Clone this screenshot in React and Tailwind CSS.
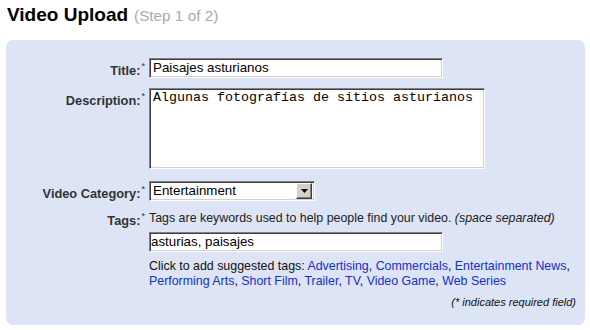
import React from "react";

const inset =
  "border border-t-[#808080] border-l-[#808080] border-b-white border-r-white shadow-[inset_1px_1px_0_#404040,inset_-1px_-1px_0_#d4d0c8] bg-white";

const Label = ({ children, className = "" }) => (
  <div className={"text-right font-bold text-[12.8px] text-[#333] " + className}>
    {children}
    <span className="font-normal text-[9px] align-top relative top-[-1px] ml-[1px]">*</span>
  </div>
);

const tags = [
  "Advertising",
  "Commercials",
  "Entertainment News",
  "Performing Arts",
  "Short Film",
  "Trailer",
  "TV",
  "Video Game",
  "Web Series",
];

const App = () => {
  return (
    <div className="w-[590px] h-[330px] bg-white overflow-hidden font-['Liberation_Sans',Arial,sans-serif] text-black">
      <div className="pl-[7px] pt-[3px] h-[40px] flex items-baseline">
        <h1 className="text-[19px] font-bold leading-[24px]">Video Upload</h1>
        <span className="ml-[6px] text-[15.3px] text-[#aaa]">(Step 1 of 2)</span>
      </div>

      <div className="ml-[6px] w-[579px] h-[285px] bg-[#dce4f5] rounded-[7px] pt-[18px]">
        <div className="grid grid-cols-[139px_1fr] gap-x-[4px]">
          <Label className="pt-[3px]">Title:</Label>
          <div className={"w-[294px] h-[20px] px-[3px] text-[13.33px] leading-[18px] " + inset}>
            Paisajes asturianos
          </div>

          <Label className="mt-[8px] pt-[3px]">Description:</Label>
          <div className={"mt-[8px] w-[336px] h-[81px] px-[3px] pt-[1px] font-['Liberation_Mono','Courier_New',monospace] text-[13.33px] leading-[16px] " + inset}>
            Algunas fotografías de sitios asturianos
          </div>

          <Label className="mt-[12px] pt-[3px]">Video Category:</Label>
          <div className={"mt-[12px] w-[166px] h-[20px] flex items-center justify-between pl-[3px] pr-[2px] text-[13.33px] " + inset}>
            <span className="leading-[16px]">Entertainment</span>
            <div className="w-[16px] h-[16px] bg-[#d4d0c8] border border-t-white border-l-white border-b-[#404040] border-r-[#404040] shadow-[inset_-1px_-1px_0_#808080] flex items-center justify-center">
              <svg width="7" height="4" viewBox="0 0 7 4">
                <path d="M0 0h7L3.5 4z" fill="#000" />
              </svg>
            </div>
          </div>

          <Label className="mt-[8px]">Tags:</Label>
          <div className="mt-[8px] text-[12.4px] leading-[15px] text-[#222]">
            Tags are keywords used to help people find your video.{" "}
            <span className="italic">(space separated)</span>
          </div>

          <div />
          <div className={"mt-[1px] w-[294px] h-[20px] px-[1px] text-[13.33px] leading-[18px] " + inset}>
            asturias, paisajes
          </div>

          <div />
          <div className="mt-[7px] pr-[4px] text-[12.4px] leading-[15px] text-[#111]">
            Click to add suggested tags:{" "}
            {tags.map((t, i) => (
              <span key={t}>
                <a className="text-[#1530c4] cursor-pointer">{t}</a>
                {i < tags.length - 1 ? ", " : ""}
              </span>
            ))}
          </div>
        </div>

        <div className="mt-[5px] pr-[9px] text-right text-[11px] italic text-[#111]">
          (* indicates required field)
        </div>
      </div>
    </div>
  );
};

export default App;
